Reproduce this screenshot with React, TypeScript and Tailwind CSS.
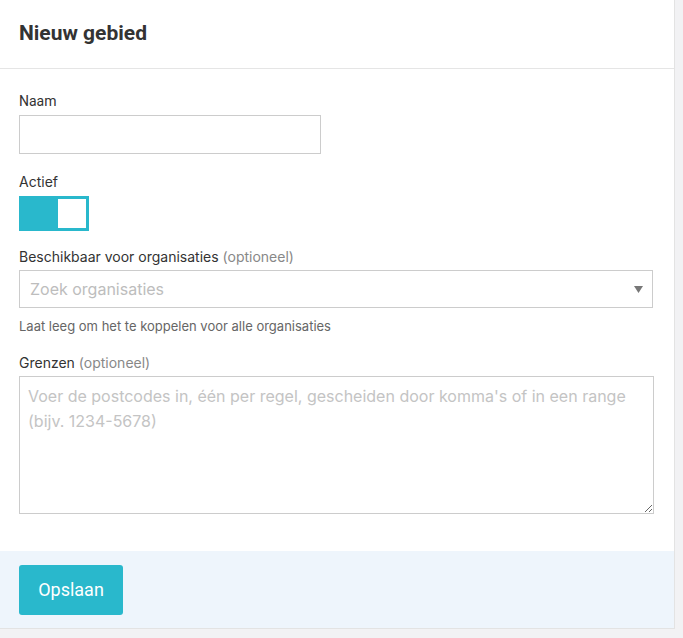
import React from "react";

export default function App() {
  return (
    <div className="w-[683px] h-[638px] bg-[#f2f2f4] overflow-hidden" style={{ fontFamily: "Inter, 'Noto Sans', sans-serif" }}>
      <div className="w-[675px] h-[629px] bg-white border-r border-b border-[#e3e3e3] flex flex-col">
        <div className="h-[69px] shrink-0 border-b border-[#e5e5e5] flex items-center px-[19px]">
          <h1 className="text-[21px] font-bold text-[#333] font-['Roboto']">Nieuw gebied</h1>
        </div>
        <div className="px-[19px] pt-[22px] pb-[37px]">
          <div className="text-[14px] text-[#333] leading-[20px] font-['Roboto']">Naam</div>
          <input className="mt-[4px] block w-[302px] h-[39px] border border-[#cccccc] outline-none" />
          <div className="mt-[18px] text-[14px] text-[#333] leading-[20px]">Actief</div>
          <div className="mt-[4px] w-[70px] h-[35px] bg-[#29b8cc] p-[3px] flex justify-end">
            <div className="w-[28px] h-[29px] bg-white"></div>
          </div>
          <div className="mt-[16px] text-[14px] text-[#333] leading-[20px]">
            Beschikbaar voor organisaties <span className="text-[#888]">(optioneel)</span>
          </div>
          <div className="mt-[3px] w-[634px] h-[38px] border border-[#cccccc] flex items-center justify-between pl-[10px] pr-[9px]">
            <span className="text-[16px] text-[#bdbdbd]">Zoek organisaties</span>
            <svg width="9" height="7" viewBox="0 0 9 7"><polygon points="0,0 9,0 4.5,7" fill="#777" /></svg>
          </div>
          <div className="mt-[9px] text-[13px] text-[#666] leading-[18px]">Laat leeg om het te koppelen voor alle organisaties</div>
          <div className="mt-[18px] text-[14px] text-[#333] leading-[20px]">
            Grenzen <span className="text-[#888]">(optioneel)</span>
          </div>
          <textarea
            className="mt-[3px] block w-[635px] h-[138px] border border-[#cccccc] px-[8px] py-[7px] text-[16px] leading-[25px] placeholder:text-[#c4c4c4] outline-none resize"
            placeholder="Voer de postcodes in, één per regel, gescheiden door komma's of in een range (bijv. 1234-5678)"
          />
        </div>
        <div className="flex-1 bg-[#eef5fc] px-[19px] flex items-center">
          <button className="w-[104px] h-[50px] bg-[#29b8cc] rounded-[3px] text-white text-[18px] font-['Roboto']">Opslaan</button>
        </div>
      </div>
    </div>
  );
}
